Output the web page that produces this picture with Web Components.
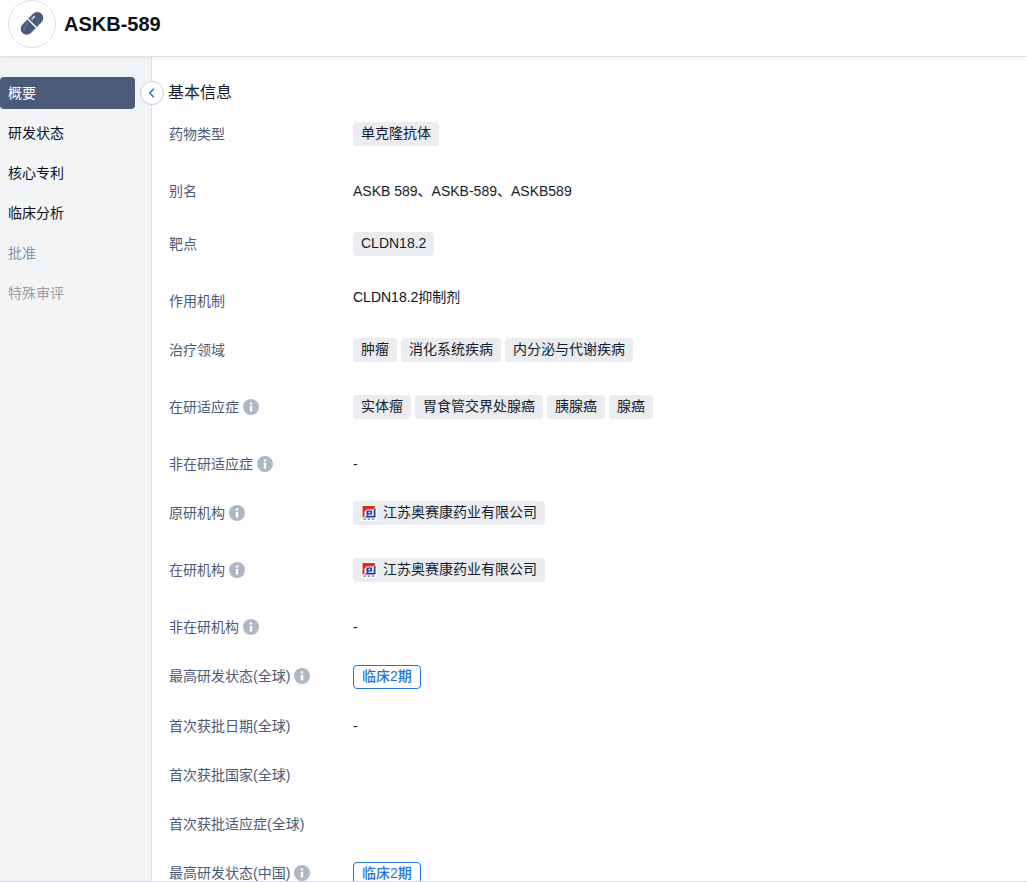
<!DOCTYPE html>
<html lang="en">
<head>
<meta charset="UTF-8">
<title>ASKB-589</title>
<style>
  html, body { margin: 0; height: 100%; overflow: hidden; background: #fff; }
  body { font-family: "Liberation Sans", "Noto Sans CJK SC", sans-serif; font-size: 14px; color: #161c2b; }
</style>
</head>
<body>
<drug-page>
  <drug-header slot="header" name="ASKB-589"></drug-header>
  <side-nav slot="nav">
    <nav-item active>概要</nav-item>
    <nav-item>研发状态</nav-item>
    <nav-item>核心专利</nav-item>
    <nav-item>临床分析</nav-item>
    <nav-item muted>批准</nav-item>
    <nav-item grey>特殊审评</nav-item>
  </side-nav>
  <info-section slot="main" heading="基本信息">
    <info-row label="药物类型"><info-tag>单克隆抗体</info-tag></info-row>
    <info-row label="别名" tall><span>ASKB 589、ASKB-589、ASKB589</span></info-row>
    <info-row label="靶点"><info-tag>CLDN18.2</info-tag></info-row>
    <info-row label="作用机制" raised><span style="color:#0b1120">CLDN18.2抑制剂</span></info-row>
    <info-row label="治疗领域"><info-tag>肿瘤</info-tag><info-tag>消化系统疾病</info-tag><info-tag>内分泌与代谢疾病</info-tag></info-row>
    <info-row label="在研适应症" hint><info-tag>实体瘤</info-tag><info-tag>胃食管交界处腺癌</info-tag><info-tag>胰腺癌</info-tag><info-tag>腺癌</info-tag></info-row>
    <info-row label="非在研适应症" hint><span>-</span></info-row>
    <info-row label="原研机构" hint><info-tag><org-logo></org-logo>江苏奥赛康药业有限公司</info-tag></info-row>
    <info-row label="在研机构" hint><info-tag><org-logo></org-logo>江苏奥赛康药业有限公司</info-tag></info-row>
    <info-row label="非在研机构" hint><span>-</span></info-row>
    <info-row label="最高研发状态(全球)" hint><phase-tag>临床2期</phase-tag></info-row>
    <info-row label="首次获批日期(全球)"><span>-</span></info-row>
    <info-row label="首次获批国家(全球)"></info-row>
    <info-row label="首次获批适应症(全球)"></info-row>
    <info-row label="最高研发状态(中国)" hint><phase-tag>临床2期</phase-tag></info-row>
  </info-section>
</drug-page>
<script>
  function define(name, html) {
    class El extends HTMLElement {
      constructor() {
        super();
        this.attachShadow({ mode: 'open' });
        this.shadowRoot.innerHTML = typeof html === 'function' ? html(this) : html;
      }
    }
    customElements.define(name, El);
  }

  define('drug-page', `
    <style>
      :host { display: flex; flex-direction: column; height: 882px; overflow: hidden; box-sizing: border-box; border-bottom: 1px solid #d5d7dc; }
      .body { flex: 1; display: flex; min-height: 0; }
      .main { flex: 1; position: relative; min-width: 0; padding: 24px 0 0 16px; }
      .toggle { position: absolute; left: -12px; top: 24px; width: 24px; height: 24px; box-sizing: border-box; border: 1px solid #c8ccd6; border-radius: 50%; background: #fff; display: flex; align-items: center; justify-content: center; }
    </style>
    <slot name="header"></slot>
    <div class="body">
      <slot name="nav"></slot>
      <div class="main">
        <div class="toggle"><svg width="12" height="12" viewBox="0 0 12 12" fill="none" stroke="#1f74d9" stroke-width="1.5"><path d="M7.8 1.8 3.8 6l4 4.2"/></svg></div>
        <slot name="main"></slot>
      </div>
    </div>`);

  define('drug-header', el => `
    <style>
      :host { display: flex; align-items: flex-start; gap: 8px; height: 57px; flex: none; box-sizing: border-box; padding-left: 8px; border-bottom: 1px solid #e1e3e8; box-shadow: 0 1px 3px rgba(20,30,50,.06); position: relative; }
      .avatar { width: 48px; height: 48px; box-sizing: border-box; border: 1px solid #dfe1e6; border-radius: 50%; display: flex; align-items: center; justify-content: center; }
      h1 { margin: 10px 0 0; font: 700 20px/28px "Liberation Sans", sans-serif; color: #0b1120; }
    </style>
    <div class="avatar">
      <svg width="32" height="32" viewBox="0 0 32 32" fill="none">
        <g transform="rotate(-45 16 15.4)">
          <rect x="2.5" y="9.4" width="27" height="12" rx="6" fill="#4a5a78"/>
          <path d="M18.5 11.4h4.6a3.8 3.8 0 0 1 0 1.6h-4.6z" fill="#fff" opacity=".75"/>
          <path d="M15.4 9.4h1.4v12h-1.4z" fill="#fff"/>
          <path d="M5.2 15.4a3.6 3.6 0 0 1 3.6-3.6h5.2v1.5H8.8a2.1 2.1 0 0 0-2.1 2.1z" fill="#fff" opacity=".18"/>
        </g>
      </svg>
    </div>
    <h1>${el.getAttribute('name')}</h1>`);

  define('side-nav', `
    <style>
      :host { display: flex; flex-direction: column; gap: 8px; width: 152px; flex: none; box-sizing: border-box; padding: 20px 16px 0 0; background: #f3f4f6; border-right: 1px solid #e1e3e8; }
    </style>
    <slot></slot>`);

  define('nav-item', `
    <style>
      :host { display: block; height: 32px; line-height: 32px; padding-left: 8px; color: #0b1120; }
      :host([active]) { background: #4a5a78; color: #fff; border-radius: 4px; }
      :host([muted]) { color: #8593ab; }
      :host([grey]) { color: #9a9ea6; }
    </style>
    <slot></slot>`);

  define('info-section', el => `
    <style>
      :host { display: block; }
      h2 { margin: 0 0 17px; font: 400 16px/24px "Liberation Sans", "Noto Sans CJK SC", sans-serif; color: #161c2b; }
    </style>
    <h2>${el.getAttribute('heading')}</h2>
    <slot></slot>`);

  define('info-row', el => `
    <style>
      :host { display: flex; margin-bottom: 25px; min-height: 24px; padding-left: 1px; }
      :host([tall]) { min-height: 28px; }
      .label { width: 184px; flex: none; display: flex; align-items: center; gap: 4px; height: 24px; color: #4b5a78; }
      .label .t { margin-top: -2px; }
      :host([raised]) .value { margin-top: -4px; }
      .value { flex: 1; display: flex; flex-wrap: wrap; align-items: flex-start; gap: 0 4px; min-height: 24px; line-height: 24px; color: #161c2b; }
      .i { width: 16px; height: 16px; border-radius: 50%; background: #afb6c5; display: flex; align-items: center; justify-content: center; }
    </style>
    <div class="label"><span class="t">${el.getAttribute('label')}</span>${el.hasAttribute('hint') ? `<span class="i"><svg width="16" height="16" viewBox="0 0 16 16" fill="#fff"><rect x="6.8" y="3.3" width="2.4" height="2.3" rx=".7"/><rect x="6.8" y="6.7" width="2.4" height="5.8" rx=".5"/></svg></span>` : ''}</div>
    <div class="value"><slot></slot></div>`);

  define('info-tag', `
    <style>
      :host { display: inline-flex; align-items: center; gap: 6px; height: 24px; box-sizing: border-box; padding: 0 8px 2px; margin-bottom: 8px; border-radius: 4px; background: #ebecf0; color: #161c2b; white-space: nowrap; }
    </style>
    <slot></slot>`);

  define('phase-tag', `
    <style>
      :host { display: inline-block; height: 22px; line-height: 20px; padding: 0 8px; margin-top: 1px; border: 1px solid #1f74d9; border-radius: 4px; color: #1f74d9; font-weight: 500; white-space: nowrap; }
    </style>
    <slot></slot>`);

  define('org-logo', `
    <style>
      :host { display: inline-block; width: 16px; height: 16px; margin-bottom: -2px; background: #fff; border-radius: 2px; }
      svg { display: block; }
    </style>
    <svg width="16" height="16" viewBox="0 0 16 16">
      <path d="M1.5 1h12.5v1.5L12 4.5H5.5L3.5 6.5V11.5L1.5 13z" fill="#e02a1c"/>
      <path d="M14.5 3v9.5H3.5l2-1.8h7.2V4.6z" fill="#1a3da6"/>
      <path d="M5.5 5.6h5.6v3.8H7.4v1.3H5.5zM7.4 6.8v1.4h1.9V6.8z" fill="#1a3da6" fill-rule="evenodd"/>
      <path d="M2.5 13.6h2.4v1.2H2.5zM6.6 13.6H9v1.2H6.6zM10.8 13.6h2.4v1.2h-2.4z" fill="#4f6cb8"/>
    </svg>`);
</script>
</body>
</html>
